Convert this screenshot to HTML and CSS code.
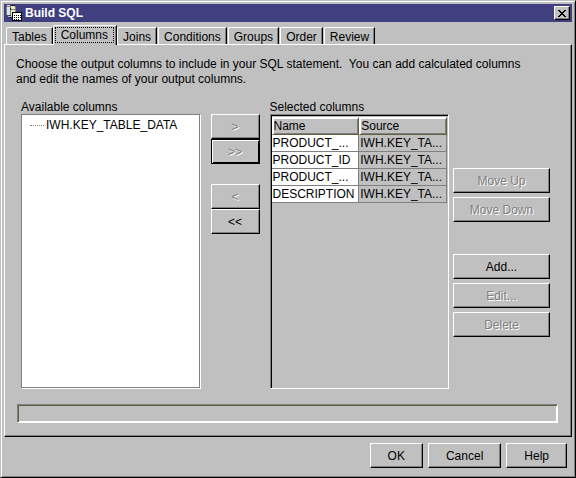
FILE: index.html
```html
<!DOCTYPE html>
<html lang="en">
<head>
    <meta charset="UTF-8">
    <meta name="viewport" content="width=device-width, initial-scale=1.0">
    <title>Build SQL</title>
    <link rel="stylesheet" href="styles.css">
</head>
<body>
    <div class="window">
        <header class="title-bar">
            <svg class="app-icon" width="16" height="16" viewBox="0 0 16 16" shape-rendering="crispEdges" aria-hidden="true">
                <path fill="#808080" d="M0 1h5v9h-5z"/>
                <path fill="#d8e8e8" d="M1 2h3v8h-3z"/>
                <path fill="#e8e0b0" d="M1 0h3v1h-3z"/>
                <path fill="#202020" d="M4 3h1v2h-1zM4 10h2v1h-2z"/>
                <path fill="#ece6c0" d="M5 1h4v10h-4z"/>
                <path fill="#808080" d="M9 2h1v5h-1zM5 4h4v1h-4z"/>
                <path fill="#202020" d="M5 0h4v1h-4zM9 7h4v1h-4zM3 12h3v1h-3z"/>
                <path fill="#c0c0c0" d="M2 11h4v1h-4z"/>
                <path fill="#000" d="M6 7h10v9h-10z"/>
                <path fill="#fff" d="M7 8h8v7h-8z"/>
                <path fill="#000" d="M8 10h1v1h-1zM10 10h1v1h-1zM12 10h1v1h-1zM8 12h1v1h-1zM10 12h1v1h-1zM12 12h1v1h-1zM14 10h1v1h-1zM14 12h1v1h-1zM8 14h1v1h-1zM10 14h1v1h-1zM12 14h1v1h-1z"/>
            </svg>
            <h1>Build SQL</h1>
            <button class="close" aria-label="Close">
                <svg width="8" height="7" viewBox="0 0 8 7" shape-rendering="crispEdges" aria-hidden="true">
                    <path d="M0 0h2v1h1v1h2v-1h1v-1h2v1h-1v1h-1v1h-1v1h1v1h1v1h1v1h-2v-1h-1v-1h-2v1h-1v1h-2v-1h1v-1h1v-1h1v-1h-1v-1h-1v-1h-1z"/>
                </svg>
            </button>
        </header>

        <nav class="tabs" role="tablist">
            <button class="tab" role="tab">Tables</button>
            <button class="tab active" role="tab" aria-selected="true"><span>Columns</span></button>
            <button class="tab" role="tab">Joins</button>
            <button class="tab" role="tab">Conditions</button>
            <button class="tab" role="tab">Groups</button>
            <button class="tab" role="tab">Order</button>
            <button class="tab" role="tab">Review</button>
        </nav>

        <main class="panel" role="tabpanel">
            <p class="intro">Choose the output columns to include in your SQL statement.&nbsp; You can add calculated columns<br>and edit the names of your output columns.</p>

            <div class="chooser">
                <section class="column-box">
                    <h2 id="available">Available columns</h2>
                    <ul class="tree" aria-labelledby="available">
                        <li>IWH.KEY_TABLE_DATA</li>
                    </ul>
                </section>

                <div class="transfer">
                    <button class="btn" disabled>&gt;</button>
                    <button class="btn default" disabled>&gt;&gt;</button>
                    <button class="btn group" disabled>&lt;</button>
                    <button class="btn">&lt;&lt;</button>
                </div>

                <section class="column-box">
                    <h2 id="selected">Selected columns</h2>
                    <div class="grid-box">
                        <table aria-labelledby="selected">
                            <thead>
                                <tr><th>Name</th><th>Source</th></tr>
                            </thead>
                            <tbody>
                                <tr><td>PRODUCT_...</td><td>IWH.KEY_TA...</td></tr>
                                <tr><td>PRODUCT_ID</td><td>IWH.KEY_TA...</td></tr>
                                <tr><td>PRODUCT_...</td><td>IWH.KEY_TA...</td></tr>
                                <tr><td>DESCRIPTION</td><td>IWH.KEY_TA...</td></tr>
                            </tbody>
                        </table>
                    </div>
                </section>

                <div class="actions">
                    <button class="btn" disabled>Move Up</button>
                    <button class="btn" disabled>Move Down</button>
                    <button class="btn group">Add...</button>
                    <button class="btn" disabled>Edit...</button>
                    <button class="btn" disabled>Delete</button>
                </div>
            </div>

            <div class="status" role="status"></div>
        </main>

        <footer class="buttons">
            <button class="btn">OK</button>
            <button class="btn">Cancel</button>
            <button class="btn">Help</button>
        </footer>
    </div>
</body>
</html>
```

FILE: styles.css
```css
* {
    box-sizing: border-box;
}
body {
    margin: 0;
    background-color: #c0c0c0;
    color: #000;
    font-family: "Liberation Sans", Arial, sans-serif;
    font-size: 12px;
}
h1, h2, p, ul {
    margin: 0;
    padding: 0;
}
button {
    font: inherit;
    color: inherit;
    background-color: #c0c0c0;
    border-radius: 0;
}
.window {
    display: flex;
    flex-direction: column;
    min-height: 100vh;
    padding: 3px 3px 9px 3px;
    border: 1px solid #c0c0c0;
    border-right-color: #000;
    border-bottom-color: #000;
    box-shadow: inset 1px 1px #fff, inset -1px -1px #808080;
}

/* title bar */
.title-bar {
    display: flex;
    align-items: center;
    height: 18px;
    padding: 0 2px;
    background-color: #404080;
    color: #fff;
}
.title-bar h1 {
    flex: 1;
    margin-left: 3px;
    font-size: 12px;
    line-height: 18px;
}
.close {
    display: flex;
    align-items: center;
    justify-content: center;
    width: 16px;
    height: 14px;
    padding: 0;
    border: 1px solid;
    border-color: #fff #000 #000 #fff;
    box-shadow: inset -1px -1px #808080;
}

/* tabs */
.tabs {
    display: flex;
    align-items: flex-end;
    gap: 1px;
    height: 22px;
    padding-left: 2px;
}
.tab {
    height: 17px;
    padding: 0 5px;
    border: 1px solid;
    border-color: #fff #000 #c0c0c0 #fff;
    border-bottom: 0;
    border-top-left-radius: 2px;
    box-shadow: inset -1px 0 #808080;
    line-height: 18px;
}
/* active tab covers its neighbours and the panel edge */
.tab.active {
    position: relative;
    height: 20px;
    margin: 0 -1px -1px;
    padding: 1px 2px 2px 1px;
}
.tab.active span {
    display: block;
    height: 16px;
    padding: 0 5px;
    border: 1px dotted #000;
    line-height: 15px;
}

/* panel */
.panel {
    display: flex;
    flex: 1;
    flex-direction: column;
    padding: 12px 13px 13px 11px;
    border: 1px solid;
    border-color: #fff #000 #000 #fff;
    box-shadow: inset -1px -1px #808080;
}
.intro {
    line-height: 15px;
}
.chooser {
    display: grid;
    flex: 1;
    grid-template-columns: 1fr 69px 1fr 101px;
    margin: 13px 8px 15px 5px;
}
.column-box {
    display: flex;
    flex-direction: column;
}
.column-box h2 {
    font-size: 12px;
    font-weight: normal;
    line-height: 14px;
}
.tree {
    flex: 1;
    margin: 0 1px 1px 0;
    padding: 3px 8px;
    border: 1px solid #808080;
    box-shadow: 1px 1px #fff;
    background-color: #fff;
    list-style: none;
}
.tree li {
    display: flex;
    align-items: center;
    gap: 2px;
    line-height: 15px;
}
.tree li::before {
    content: "";
    width: 14px;
    border-top: 1px dotted #808080;
}
.transfer, .actions {
    display: flex;
    flex-direction: column;
}
.transfer {
    padding: 14px 10px 0;
}
.actions {
    gap: 4px;
    padding: 68px 0 0 4px;
}
.grid-box {
    flex: 1;
    border: 1px solid;
    border-color: #808080 #fff #fff #808080;
    box-shadow: inset 1px 1px #000;
    padding: 2px 1px 0;
}
table {
    width: 100%;
    table-layout: fixed;
    border-collapse: separate;
    border-spacing: 0;
}
th, td {
    padding: 0 0 0 1px;
    text-align: left;
    white-space: nowrap;
}
th {
    height: 18px;
    border: 1px solid;
    border-color: #fff #606040 #606040 #fff;
    box-shadow: inset 1px 1px #fff, inset -1px -1px #808080;
    font-weight: normal;
    line-height: 16px;
}
td {
    height: 17px;
    border-right: 1px solid #808080;
    border-bottom: 1px solid #808080;
    line-height: 16px;
}
td:first-child {
    background-color: #fff;
}

/* push buttons */
.btn {
    height: 25px;
    padding: 0 16px;
    border: 1px solid;
    border-color: #fff #000 #000 #fff;
    box-shadow: inset -1px -1px #808080;
    white-space: nowrap;
}
.btn:disabled {
    color: #808080;
    text-shadow: 1px 1px #fff;
}
.btn.default {
    border-color: #000;
    box-shadow: inset 1px 1px #fff, inset -1px -1px #000;
}
.transfer .btn, .actions .btn {
    padding: 0;
}
.transfer .group {
    margin-top: 20px;
}
.actions .group {
    margin-top: 28px;
}
.status {
    height: 19px;
    margin-left: 1px;
    border: 1px solid;
    border-color: #808080 #fff #fff #808080;
    box-shadow: inset 1px 1px #606040, inset -1px -1px #fff;
}
.buttons {
    display: flex;
    justify-content: flex-end;
    gap: 5px;
    padding: 6px 5px 0 0;
}
.buttons .btn {
    padding: 0 17px;
}
```
